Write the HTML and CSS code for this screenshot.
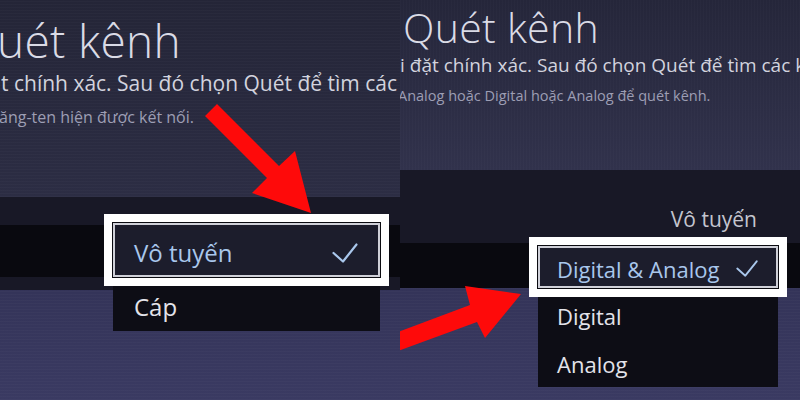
FILE: index.html
```html
<!DOCTYPE html>
<html lang="vi">
<head>
<meta charset="utf-8">
<title>Quét kênh</title>
<link rel="stylesheet" href="styles.css">
</head>
<body>
<main class="screen">
  <section class="panel panel-a">
    <header class="head">
      <h1 class="title">uét kênh</h1>
      <p class="desc">t chính xác. Sau đó chọn Quét để tìm các k</p>
      <p class="note">ăng-ten hiện được kết nối.</p>
    </header>
    <div class="band">
      <div class="row"></div>
    </div>
    <ul class="menu">
      <li class="item focus"><span>Vô tuyến</span>
        <svg class="check" viewBox="0 0 26 20"><path d="M1.5 10 L11 18.5 L24.5 1.5"/></svg>
      </li>
      <li class="item"><span>Cáp</span></li>
    </ul>
    <svg class="arrow" viewBox="200 100 115 116"><polygon points="217,104 279,166 295,151 311,213 252,193 267,178 205,116"/></svg>
  </section>
  <section class="panel panel-b">
    <header class="head">
      <h1 class="title">Quét kênh</h1>
      <p class="desc">i đặt chính xác. Sau đó chọn Quét để tìm các kênh.</p>
      <p class="note">Analog hoặc Digital hoặc Analog để quét kênh.</p>
    </header>
    <div class="band">
      <div class="label">Vô tuyến</div>
      <div class="row"></div>
    </div>
    <ul class="menu">
      <li class="item focus"><span>Digital &amp; Analog</span>
        <svg class="check" viewBox="0 0 26 20"><path d="M1.5 10 L11 18.5 L24.5 1.5"/></svg>
      </li>
      <li class="item"><span>Digital</span></li>
      <li class="item"><span>Analog</span></li>
    </ul>
    <svg class="arrow" viewBox="0 280 125 75"><polygon points="-2,332 70,305 65,286 121,294 85,338 77,322 -2,351"/></svg>
  </section>
</main>
</body>
</html>
```
FILE: styles.css
```css
* { box-sizing: border-box; }
html, body { margin: 0; padding: 0; }
body {
  width: 800px;
  height: 400px;
  overflow: hidden;
  background: #1a1a28;
  font-family: "Open Sans", "Noto Sans", sans-serif;
}
.screen {
  display: flex;
  width: 800px;
  height: 400px;
}
.panel {
  position: relative;
  width: 400px;
  height: 400px;
  overflow: hidden;
  white-space: nowrap;
  background:
    repeating-linear-gradient(0deg, rgba(255,255,255,0.02) 0 1px, rgba(0,0,0,0) 1px 3px),
    linear-gradient(180deg, #2b2b4a 0%, #303053 55%, #3a3a62 100%);
}
.head { margin: 0; overflow: hidden; }
.title, .desc, .note { margin: 0; font-weight: 400; overflow: hidden; }
.title { font-weight: 300; color: #dadbe6; }
.desc { color: #d2d3de; }
.note { color: #9d9eb4; }

.band { background: #181826; }
.row { background: #09090f; }

/* left panel */
.panel-a .head {
  padding-top: 14px;
  height: 197px;
  background:
    repeating-linear-gradient(0deg, rgba(255,255,255,0.02) 0 1px, rgba(0,0,0,0) 1px 3px),
    linear-gradient(180deg, #242537 0%, #2c2d44 100%);
}
.panel-a .title { font-size: 46px; line-height: 53px; letter-spacing: 0.3px; margin-left: -3px; }
.panel-a .desc { font-size: 21px; line-height: 28px; margin-top: 2px; margin-left: 1px; }
.panel-a .note { font-size: 16px; line-height: 22px; margin-top: 9px; margin-left: -1px; }
.panel-a .band { padding: 28px 0 13px; }
.panel-a .row { height: 52px; }

/* right panel */
.panel-b .head {
  padding-top: 3px;
  height: 170px;
  background:
    repeating-linear-gradient(90deg, rgba(255,255,255,0.015) 0 1px, rgba(0,0,0,0) 1px 3px),
    linear-gradient(180deg, #25263a 0%, #31324c 100%);
}
.panel-b .title { font-size: 41px; line-height: 49px; letter-spacing: 0.3px; margin-left: 3px; }
.panel-b .desc { font-size: 19px; line-height: 26px; }
.panel-b .note { font-size: 14.5px; line-height: 19px; margin-top: 8px; margin-left: -2px; }
.panel-b .band { padding-top: 35px; }
.panel-b .label {
  font-size: 21px;
  line-height: 29px;
  color: #c4c5cf;
  text-align: right;
  padding-right: 43px;
  margin-bottom: 9px;
}
.panel-b .row { height: 45px; }

/* dropdown menus */
.menu {
  position: absolute;
  margin: 0;
  padding: 0;
  list-style: none;
  background: #0d0d15;
}
.item {
  display: flex;
  align-items: center;
  justify-content: space-between;
  color: #e3e3ea;
}
.item.focus {
  color: #a9c7ec;
  background: #1c1d2c;
  border: 2px solid #cfd0d8;
  box-shadow: 0 0 0 1px #0b0b10, 0 0 0 9px #ffffff;
}
.check { fill: none; stroke: #a9c7ec; stroke-width: 2.2; stroke-linecap: round; stroke-linejoin: round; }

.panel-a .menu { left: 113px; top: 223px; width: 267px; }
.panel-a .item { height: 54px; padding: 4px 0 0 21px; font-size: 24px; line-height: 33px; }
.panel-a .item.focus { padding: 5px 20px 0 19px; }
.panel-a .check { width: 26px; height: 20px; }

.panel-b .menu { left: 138px; top: 243px; width: 240px; }
.panel-b .item { height: 48px; padding: 2px 0 0 19px; font-size: 22px; line-height: 30px; }
.panel-b .item.focus { height: 42px; margin: 3px 0; padding: 3px 18px 0 17px; }
.panel-b .check { width: 22px; height: 17px; }

/* annotation arrows */
.arrow { position: absolute; fill: #fe0a0a; }
.panel-a .arrow { left: 200px; top: 100px; width: 115px; height: 116px; }
.panel-b .arrow { left: 0; top: 280px; width: 125px; height: 75px; }
```
